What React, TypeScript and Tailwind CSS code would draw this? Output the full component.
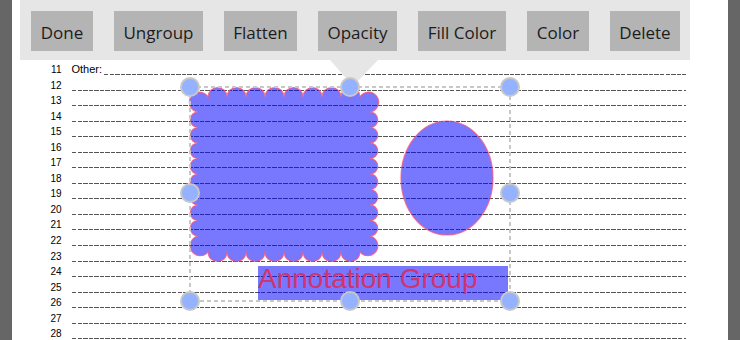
import React from "react";

const buttons = [
  { label: "Done", w: "w-[62px]" },
  { label: "Ungroup", w: "w-[89px]" },
  { label: "Flatten", w: "w-[73px]" },
  { label: "Opacity", w: "w-[79px]" },
  { label: "Fill Color", w: "w-[88px]" },
  { label: "Color", w: "w-[62px]" },
  { label: "Delete", w: "w-[70px]" },
];

const rows = Array.from({ length: 18 }, (_, i) => 11 + i);

// scalloped "cloud" border around a rectangle of cusp points
function cloudPath(x0: number, y0: number, x1: number, y1: number) {
  const topXs: number[] = [];
  for (let x = x0 + 10; x <= x1 - 10 + 0.01; x += (x1 - x0 - 20) / 8) topXs.push(x);
  const sideYs: number[] = [];
  for (let y = y0 + 15; y <= y1 - 16 + 0.01; y += (y1 - y0 - 31) / 8) sideYs.push(y);
  const hr = (topXs[1] - topXs[0]) / 2;
  const vr = (sideYs[1] - sideYs[0]) / 2;
  const cr = 10;
  let d = `M${topXs[0]},${y0}`;
  topXs.slice(1).forEach((x) => (d += ` A${hr},${hr} 0 0 1 ${x},${y0}`));
  d += ` A${cr},${cr} 0 1 1 ${x1},${sideYs[0]}`;
  sideYs.slice(1).forEach((y) => (d += ` A${vr},${vr} 0 0 1 ${x1},${y}`));
  const rev = [...topXs].reverse();
  d += ` A${cr},${cr} 0 1 1 ${rev[0]},${y1}`;
  rev.slice(1).forEach((x) => (d += ` A${hr},${hr} 0 0 1 ${x},${y1}`));
  const revY = [...sideYs].reverse();
  d += ` A${cr},${cr} 0 1 1 ${x0},${revY[0]}`;
  revY.slice(1).forEach((y) => (d += ` A${vr},${vr} 0 0 1 ${x0},${y}`));
  d += ` A${cr},${cr} 0 1 1 ${topXs[0]},${y0} Z`;
  return d;
}

const handles: [number, number][] = [
  [190, 87],
  [350, 87],
  [510, 87],
  [190, 193],
  [510, 193],
  [190, 301],
  [350, 301],
  [510, 301],
];

function Rule() {
  return (
    <div className="h-px flex-1 bg-[repeating-linear-gradient(90deg,#555555_0_4.4px,transparent_4.4px_5.56px)]" />
  );
}

export default function App() {
  return (
    <div className="flex h-[340px] w-[740px] overflow-hidden bg-[#666666]">
      <div className="w-[12px] shrink-0" />
      <div className="relative w-[716px] shrink-0 bg-white">
        {/* form rows */}
        <div className="pt-[59.45px] font-['Liberation_Sans',Arial,sans-serif] text-black">
          {rows.map((n) => (
            <div key={n} className="flex h-[15.55px] items-end">
              <span className="w-[49.5px] text-right text-[10px] leading-none">{n}</span>
              <div className="ml-[10px] flex w-[614px] items-end">
                {n === 11 && <span className="mr-[2px] text-[11px] leading-none">Other:</span>}
                <Rule />
              </div>
            </div>
          ))}
        </div>

        {/* floating toolbar */}
        <div className="absolute left-[8px] top-0 h-[60px] w-[670px] bg-[#e6e6e6]">
          <div className="flex gap-[21px] pl-[11px] pt-[11px] font-['Open_Sans',sans-serif] text-[17px] text-[#1c1c1c]">
            {buttons.map((b) => (
              <div
                key={b.label}
                className={`${b.w} flex h-[40px] items-center justify-center whitespace-nowrap bg-[#b4b4b4] pt-[4px]`}
              >
                {b.label}
              </div>
            ))}
          </div>
          <svg className="absolute left-[310px] top-[60px]" width="48" height="28" viewBox="0 0 48 28">
            <polygon points="0,0 48,0 23,26" fill="#e6e6e6" />
          </svg>
        </div>

        {/* annotation group */}
        <svg className="absolute left-0 top-0" width="716" height="340" viewBox="12 0 716 340">
          <path
            d={cloudPath(198, 97, 370, 252)}
            fill="#0000ff"
            fillOpacity="0.53"
            stroke="#ff4d6d"
            strokeOpacity="0.75"
            strokeWidth="1.2"
          />
          <ellipse
            cx="447"
            cy="178"
            rx="46"
            ry="57"
            fill="#0000ff"
            fillOpacity="0.53"
            stroke="#ff4d6d"
            strokeOpacity="0.75"
            strokeWidth="1.2"
          />
          <rect x="258" y="266" width="250" height="34" fill="#0000ff" fillOpacity="0.53" />
          <text
            x="258"
            y="288"
            fontFamily="'Liberation Sans', Arial, sans-serif"
            fontSize="28"
            fill="#d0346f"
          >
            Annotation Group
          </text>
          <rect
            x="190"
            y="87"
            width="320"
            height="214"
            fill="none"
            stroke="#c8c8c8"
            strokeWidth="2"
            strokeDasharray="4 3"
          />
          {handles.map(([x, y]) => (
            <circle key={`${x}-${y}`} cx={x} cy={y} r="9" fill="#94b2ff" stroke="#c8c8c8" strokeWidth="2" />
          ))}
        </svg>
      </div>
      <div className="w-[12px] shrink-0" />
    </div>
  );
}
